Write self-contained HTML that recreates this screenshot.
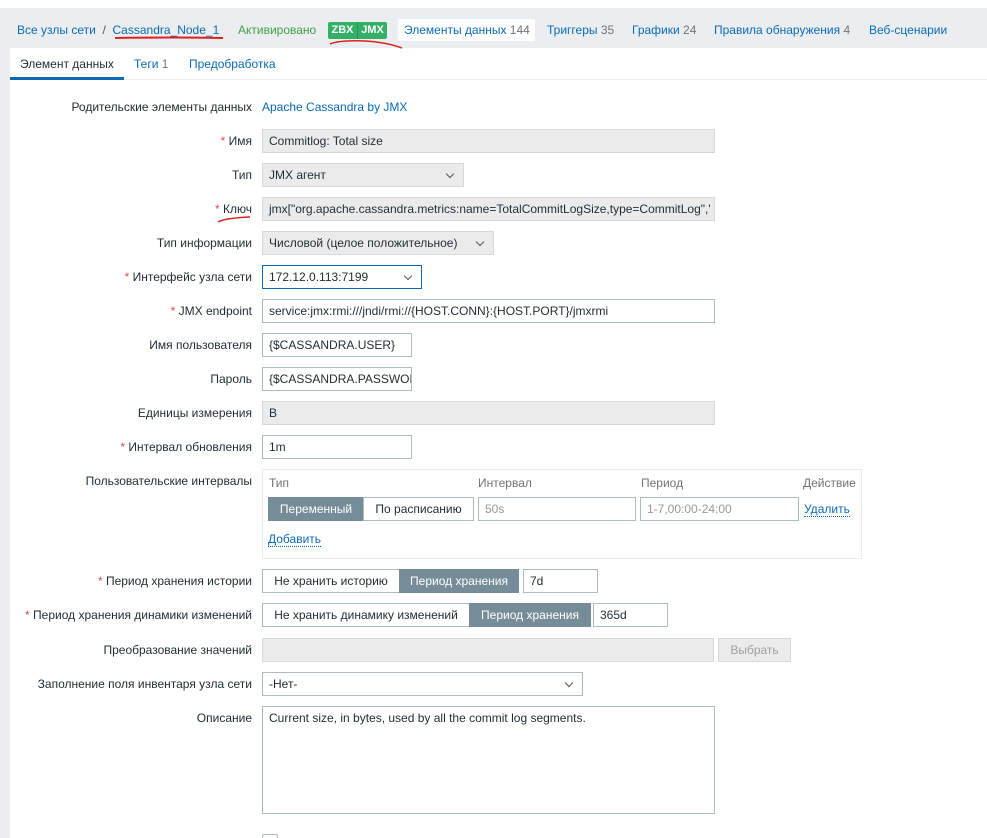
<!DOCTYPE html>
<html style="width:987px;height:838px;overflow:hidden"><head><meta charset="utf-8"><style>
*{box-sizing:border-box;margin:0;padding:0}
html,body{overflow:hidden}
body{width:987px;height:838px;position:relative;overflow:hidden;background:#fff;font-family:"Liberation Sans",Arial,sans-serif;font-size:12px;color:#1f2c33}
.a{position:absolute;white-space:nowrap}
.lbl{position:absolute;right:735px;white-space:nowrap;text-align:right}
.r{color:#d64e4e}
.in{position:absolute;height:24px;border:1px solid #acbbc2;background:#fff;padding:0 6px;line-height:22px;white-space:nowrap;overflow:hidden}
.ro{background:#ebebeb;border-color:#d3d9dc}
.sel::after{content:"";position:absolute;right:10px;top:7px;width:5px;height:5px;border-right:1px solid #555;border-bottom:1px solid #555;transform:rotate(45deg)}
.lnk{color:#0b6ab6}
.btn{position:absolute;height:24px;line-height:22px;text-align:center;border:1px solid #acbbc2;background:#fff}
.dk{background:#768d99;color:#fff;border-color:#768d99}
.gr{color:#737373}
</style></head><body>
<div class="a" style="left:0;top:8px;width:987px;height:40px;background:#ebeef0"></div>
<div class="a" style="left:0;top:48px;width:10px;height:790px;background:#ebeef0"></div>
<div class="a" style="left:10px;top:79px;width:977px;height:1px;background:#ebeef0"></div>

<div class="a lnk" style="left:17px;top:23px">Все узлы сети <span style="color:#555">&nbsp;/&nbsp;</span> Cassandra_Node_1</div>
<div class="a" style="left:238px;top:23px;color:#429e47">Активировано</div>
<div class="a" style="left:328px;top:22px;height:17px;width:59px;background:#34af67;border-radius:2px;color:#fff;font-weight:bold;font-size:11px;line-height:17px;display:flex"><span style="width:29px;text-align:center">ZBX</span><span style="width:30px;text-align:center;border-left:1px solid #2a9455">JMX</span></div>
<div class="a" style="left:398px;top:19px;width:137px;height:22px;background:#fff;border-radius:2px"></div>
<div class="a lnk" style="left:404px;top:23px">Элементы данных <span class="gr">144</span></div>
<div class="a lnk" style="left:547px;top:23px">Триггеры <span class="gr">35</span></div>
<div class="a lnk" style="left:632px;top:23px">Графики <span class="gr">24</span></div>
<div class="a lnk" style="left:714px;top:23px">Правила обнаружения <span class="gr">4</span></div>
<div class="a lnk" style="left:869px;top:23px">Веб-сценарии</div>

<div class="a" style="left:20px;top:57px">Элемент данных</div>
<div class="a" style="left:10px;top:77px;width:114px;height:3px;background:#0b6ab6"></div>
<div class="a lnk" style="left:134px;top:57px">Теги <span class="gr">1</span></div>
<div class="a lnk" style="left:189px;top:57px">Предобработка</div>

<div class="lbl" style="top:100px">Родительские элементы данных</div>
<div class="a lnk" style="left:262px;top:100px">Apache Cassandra by JMX</div>

<div class="lbl" style="top:134px"><span class="r">*</span> Имя</div>
<div class="in ro" style="left:262px;top:129px;width:453px">Commitlog: Total size</div>

<div class="lbl" style="top:168px">Тип</div>
<div class="in ro sel" style="left:262px;top:163px;width:202px">JMX агент</div>

<div class="lbl" style="top:202px"><span class="r">*</span> Ключ</div>
<div class="in ro" style="left:262px;top:197px;width:453px">jmx["org.apache.cassandra.metrics:name=TotalCommitLogSize,type=CommitLog",'</div>

<div class="lbl" style="top:236px">Тип информации</div>
<div class="in ro sel" style="left:262px;top:231px;width:232px">Числовой (целое положительное)</div>

<div class="lbl" style="top:270px"><span class="r">*</span> Интерфейс узла сети</div>
<div class="in sel" style="left:262px;top:265px;width:160px;border-color:#0b6ab6">172.12.0.113:7199</div>

<div class="lbl" style="top:304px"><span class="r">*</span> JMX endpoint</div>
<div class="in" style="left:262px;top:299px;width:453px">service:jmx:rmi:///jndi/rmi://{HOST.CONN}:{HOST.PORT}/jmxrmi</div>

<div class="lbl" style="top:338px">Имя пользователя</div>
<div class="in" style="left:262px;top:333px;width:150px">{$CASSANDRA.USER}</div>

<div class="lbl" style="top:372px">Пароль</div>
<div class="in" style="left:262px;top:367px;width:150px">{$CASSANDRA.PASSWORD}</div>

<div class="lbl" style="top:406px">Единицы измерения</div>
<div class="in ro" style="left:262px;top:401px;width:453px">B</div>

<div class="lbl" style="top:440px"><span class="r">*</span> Интервал обновления</div>
<div class="in" style="left:262px;top:435px;width:150px">1m</div>

<div class="lbl" style="top:474px">Пользовательские интервалы</div>
<div class="a" style="left:262px;top:469px;width:600px;height:90px;border:1px solid #ebebeb"></div>
<div class="a gr" style="left:269px;top:476px">Тип</div>
<div class="a gr" style="left:478px;top:476px">Интервал</div>
<div class="a gr" style="left:641px;top:476px">Период</div>
<div class="a gr" style="left:803px;top:476px">Действие</div>
<div class="btn dk" style="left:268px;top:497px;width:96px">Переменный</div>
<div class="btn" style="left:363px;top:497px;width:111px">По расписанию</div>
<div class="in" style="left:478px;top:497px;width:158px;color:#999">50s</div>
<div class="in" style="left:640px;top:497px;width:159px;color:#999">1-7,00:00-24:00</div>
<div class="a lnk" style="left:804px;top:502px;border-bottom:1px dotted #0b6ab6">Удалить</div>
<div class="a lnk" style="left:268px;top:532px;border-bottom:1px dotted #0b6ab6">Добавить</div>

<div class="lbl" style="top:574px"><span class="r">*</span> Период хранения истории</div>
<div class="btn" style="left:262px;top:569px;width:138px">Не хранить историю</div>
<div class="btn dk" style="left:399px;top:569px;width:120px">Период хранения</div>
<div class="in" style="left:523px;top:569px;width:75px">7d</div>

<div class="lbl" style="top:608px"><span class="r">*</span> Период хранения динамики изменений</div>
<div class="btn" style="left:262px;top:603px;width:208px">Не хранить динамику изменений</div>
<div class="btn dk" style="left:469px;top:603px;width:122px">Период хранения</div>
<div class="in" style="left:593px;top:603px;width:75px">365d</div>

<div class="lbl" style="top:643px">Преобразование значений</div>
<div class="in ro" style="left:262px;top:638px;width:452px"></div>
<div class="btn" style="left:718px;top:638px;width:73px;background:#ebebeb;border-color:#d3d9dc;color:#a0a0a0">Выбрать</div>

<div class="lbl" style="top:677px">Заполнение поля инвентаря узла сети</div>
<div class="in sel" style="left:262px;top:672px;width:321px">-Нет-</div>

<div class="lbl" style="top:711px">Описание</div>
<div class="in" style="left:262px;top:706px;width:453px;height:108px;line-height:22px;padding-top:0">Current size, in bytes, used by all the commit log segments.</div>

<div class="a" style="left:262px;top:834px;width:16px;height:4px;border:1px solid #acbbc2;border-bottom:none;border-radius:2px 2px 0 0"></div>

<svg class="a" style="left:0;top:0" width="987" height="838">
<path d="M115 38 Q170 37 223 38" stroke="#e02020" stroke-width="2" fill="none"/>
<path d="M330 44 Q340 40 365 41 Q385 42 402 48" stroke="#e02020" stroke-width="1.5" fill="none"/>
<path d="M218 222 Q225 218 250 217" stroke="#e02020" stroke-width="1.5" fill="none"/>
</svg>
</body></html>
